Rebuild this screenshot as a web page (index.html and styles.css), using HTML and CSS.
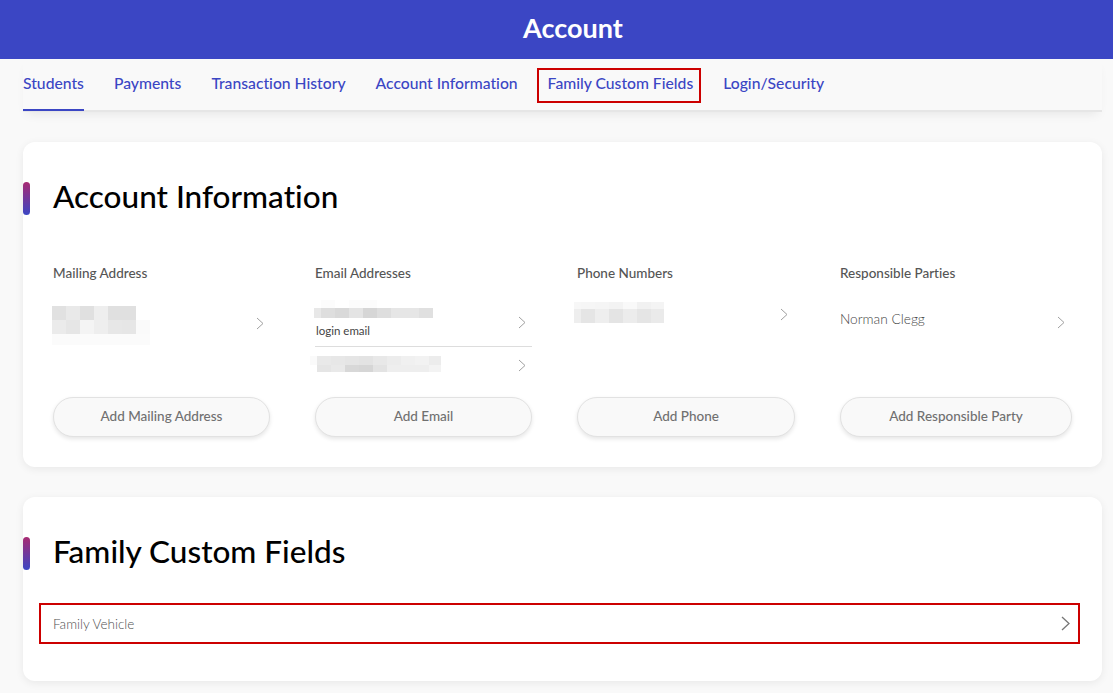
FILE: index.html
```html
<!DOCTYPE html>
<html>
<head>
    <title>Account</title>
    <link rel="stylesheet" href="styles.css">
</head>
<body>
    <header class="page-header">Account</header>
    <!-- Tabs -->
    <nav class="tabs">
        <a class="tab active">Students</a>
        <a class="tab">Payments</a>
        <a class="tab">Transaction History</a>
        <a class="tab">Account Information</a>
        <a class="tab marked">Family Custom Fields</a>
        <a class="tab">Login/Security</a>
    </nav>
    <main class="content">
        <section class="card">
            <h2 class="card-title">Account Information</h2>
            <div class="info-grid">
                <div class="info-col">
                    <h3 class="info-label">Mailing Address</h3>
                    <div class="info-list">
                        <div class="info-row row-address">
                            <!-- Blurred address -->
                            <svg class="blur" width="98" height="39" viewBox="0 0 98 39" shape-rendering="crispEdges">
                                <rect x="0" y="0" width="14" height="14" fill="#e1e1e1"/>
                                <rect x="14" y="0" width="14" height="14" fill="#e9e9e9"/>
                                <rect x="28" y="0" width="14" height="14" fill="#e0e0e0"/>
                                <rect x="42" y="0" width="14" height="14" fill="#eeeeee"/>
                                <rect x="56" y="0" width="28" height="14" fill="#e0e0e0"/>
                                <rect x="0" y="14" width="14" height="14" fill="#ebebeb"/>
                                <rect x="14" y="14" width="14" height="14" fill="#e6e6e6"/>
                                <rect x="28" y="14" width="14" height="14" fill="#f4f4f4"/>
                                <rect x="42" y="14" width="14" height="14" fill="#eeeeee"/>
                                <rect x="56" y="14" width="14" height="14" fill="#e7e7e7"/>
                                <rect x="70" y="14" width="14" height="14" fill="#e6e6e6"/>
                                <rect x="84" y="14" width="14" height="14" fill="#fafafa"/>
                                <rect x="0" y="28" width="98" height="11" fill="#fbfbfb"/>
                            </svg>
                            <svg class="chevron" width="8" height="13" viewBox="0 0 8 13"><path d="M1 1l6 5.5-6 5.5"/></svg>
                        </div>
                    </div>
                    <button class="add-btn">Add Mailing Address</button>
                </div>
                <div class="info-col">
                    <h3 class="info-label">Email Addresses</h3>
                    <div class="info-list">
                        <div class="info-row row-email">
                            <div class="email-main">
                                <!-- Blurred email -->
                                <svg class="blur" width="119" height="18" viewBox="0 0 119 18" shape-rendering="crispEdges">
                                    <rect x="7" y="0" width="14" height="8" fill="#fcfcfc"/>
                                    <rect x="35" y="0" width="28" height="8" fill="#fcfcfc"/>
                                    <rect x="0" y="8" width="7" height="10" fill="#e8e8e8"/>
                                    <rect x="7" y="8" width="14" height="10" fill="#dedede"/>
                                    <rect x="21" y="8" width="14" height="10" fill="#d9d9d9"/>
                                    <rect x="35" y="8" width="14" height="10" fill="#e4e4e4"/>
                                    <rect x="49" y="8" width="14" height="10" fill="#d6d6d6"/>
                                    <rect x="63" y="8" width="14" height="10" fill="#dedede"/>
                                    <rect x="77" y="8" width="28" height="10" fill="#e6e6e6"/>
                                    <rect x="105" y="8" width="14" height="10" fill="#e0e0e0"/>
                                </svg>
                                <span class="email-note">login email</span>
                            </div>
                            <svg class="chevron" width="8" height="13" viewBox="0 0 8 13"><path d="M1 1l6 5.5-6 5.5"/></svg>
                        </div>
                        <div class="info-row row-email-second">
                            <svg class="blur" width="131" height="16" viewBox="0 0 131 16" shape-rendering="crispEdges">
                                <rect x="0" y="0" width="7" height="9" fill="#fafafa"/>
                                <rect x="7" y="0" width="14" height="9" fill="#e9e9e9"/>
                                <rect x="21" y="0" width="14" height="9" fill="#e7e7e7"/>
                                <rect x="35" y="0" width="14" height="9" fill="#e5e5e5"/>
                                <rect x="49" y="0" width="14" height="9" fill="#e3e3e3"/>
                                <rect x="63" y="0" width="14" height="9" fill="#e8e8e8"/>
                                <rect x="77" y="0" width="14" height="9" fill="#ececec"/>
                                <rect x="91" y="0" width="14" height="9" fill="#f0f0f0"/>
                                <rect x="105" y="0" width="14" height="9" fill="#f2f2f2"/>
                                <rect x="119" y="0" width="12" height="9" fill="#ececec"/>
                                <rect x="7" y="9" width="14" height="7" fill="#e5e5e5"/>
                                <rect x="21" y="9" width="14" height="7" fill="#e9e9e9"/>
                                <rect x="35" y="9" width="14" height="7" fill="#d8d8d8"/>
                                <rect x="49" y="9" width="14" height="7" fill="#d6d6d6"/>
                                <rect x="63" y="9" width="14" height="7" fill="#e3e3e3"/>
                                <rect x="77" y="9" width="42" height="7" fill="#eeeeee"/>
                                <rect x="119" y="9" width="12" height="7" fill="#f3f3f3"/>
                            </svg>
                            <svg class="chevron" width="8" height="13" viewBox="0 0 8 13"><path d="M1 1l6 5.5-6 5.5"/></svg>
                        </div>
                    </div>
                    <button class="add-btn">Add Email</button>
                </div>
                <div class="info-col">
                    <h3 class="info-label">Phone Numbers</h3>
                    <div class="info-list">
                        <div class="info-row row-phone">
                            <svg class="blur" width="90" height="21" viewBox="0 0 90 21" shape-rendering="crispEdges">
                                <rect x="0" y="0" width="7" height="7" fill="#f7f7f7"/>
                                <rect x="7" y="0" width="14" height="7" fill="#f6f6f6"/>
                                <rect x="21" y="0" width="14" height="7" fill="#f5f5f5"/>
                                <rect x="35" y="0" width="14" height="7" fill="#f3f3f3"/>
                                <rect x="49" y="0" width="14" height="7" fill="#f9f9f9"/>
                                <rect x="63" y="0" width="14" height="7" fill="#f1f1f1"/>
                                <rect x="77" y="0" width="13" height="7" fill="#f4f4f4"/>
                                <rect x="0" y="7" width="7" height="14" fill="#eeeeee"/>
                                <rect x="7" y="7" width="14" height="14" fill="#e5e5e5"/>
                                <rect x="21" y="7" width="14" height="14" fill="#eeeeee"/>
                                <rect x="35" y="7" width="14" height="14" fill="#e4e4e4"/>
                                <rect x="49" y="7" width="14" height="14" fill="#ececec"/>
                                <rect x="63" y="7" width="14" height="14" fill="#e5e5e5"/>
                                <rect x="77" y="7" width="13" height="14" fill="#eaeaea"/>
                            </svg>
                            <svg class="chevron" width="8" height="13" viewBox="0 0 8 13"><path d="M1 1l6 5.5-6 5.5"/></svg>
                        </div>
                    </div>
                    <button class="add-btn">Add Phone</button>
                </div>
                <div class="info-col">
                    <h3 class="info-label">Responsible Parties</h3>
                    <div class="info-list">
                        <div class="info-row row-party">
                            <span class="party-name">Norman Clegg</span>
                            <svg class="chevron" width="8" height="13" viewBox="0 0 8 13"><path d="M1 1l6 5.5-6 5.5"/></svg>
                        </div>
                    </div>
                    <button class="add-btn">Add Responsible Party</button>
                </div>
            </div>
        </section>
        <section class="card card-fields">
            <h2 class="card-title">Family Custom Fields</h2>
            <div class="field-row">
                <span class="field-name">Family Vehicle</span>
                <svg class="chevron-large" width="9" height="15" viewBox="0 0 9 15"><path d="M1 1l7 6.5-7 6.5"/></svg>
            </div>
        </section>
    </main>
</body>
</html>
```

FILE: styles.css
```css
* {
    box-sizing: border-box;
}
html, body {
    height: 693px;
    overflow: hidden;
}
body {
    margin: 0;
    background-color: #f9f9f9;
    font-family: Lato, "Open Sans", sans-serif;
    font-variant-ligatures: none;
    color: #555555;
}
.page-header {
    height: 59px;
    padding-left: 33px;
    background-color: #3b46c4;
    color: #ffffff;
    font-size: 27px;
    font-weight: 700;
    line-height: 56px;
    text-align: center;
}
.tabs {
    display: flex;
    gap: 30px;
    height: 53px;
    margin: 0 11px 0 23px;
    border-bottom: 2px solid #e6e6e6;
    box-shadow: 0 6px 10px -4px rgba(0, 0, 0, 0.08);
}
.tab {
    position: relative;
    height: 52px;
    color: #3b46c4;
    font-size: 15.7px;
    font-weight: 500;
    line-height: 48px;
}
.tab.active {
    border-bottom: 2px solid #3b46c4;
}
/* Red annotation box */
.tab.marked::after {
    content: "";
    position: absolute;
    top: 9px;
    left: -11px;
    right: -8px;
    height: 31px;
    border: 2px solid #cc0000;
}
.content {
    display: flex;
    flex-direction: column;
    gap: 30px;
    margin: 30px 11px 0 23px;
}
.card {
    position: relative;
    padding: 34px 30px 30px;
    background-color: #ffffff;
    border-radius: 12px;
    box-shadow: 0 2px 8px rgba(0, 0, 0, 0.07);
}
.card-fields {
    height: 184px;
}
/* Gradient marker beside the card title */
.card::before {
    content: "";
    position: absolute;
    top: 40px;
    left: 0;
    width: 7px;
    height: 33px;
    border-radius: 4px;
    background: linear-gradient(#a82a72, #3b46c4);
}
.card-title {
    margin: 0;
    color: #000000;
    font-size: 31.5px;
    font-weight: 500;
    line-height: 40px;
}
.info-grid {
    display: grid;
    grid-template-columns: 217px 217px 218px 232px;
    gap: 45px;
    margin-top: 47px;
}
.info-col {
    display: flex;
    flex-direction: column;
}
.info-label {
    margin: 0;
    color: #555555;
    font-size: 13.5px;
    font-weight: 500;
    line-height: 20px;
}
.info-list {
    height: 114px;
}
.info-row {
    display: flex;
    justify-content: space-between;
}
.blur {
    display: block;
}
.chevron path {
    fill: none;
    stroke: #a0a0a0;
    stroke-width: 1;
}
.row-address {
    padding: 23px 6px 0 0;
    margin-left: -1px;
}
.row-address .chevron {
    margin-top: 11px;
}
.row-email {
    height: 64px;
    padding: 17px 6px 0 0;
    border-bottom: 1px solid #dddddd;
}
.row-email .chevron {
    margin-top: 16px;
}
.email-main {
    margin-left: -1px;
}
.email-note {
    display: block;
    margin: 6px 0 0 2px;
    color: #444444;
    font-size: 11.5px;
    line-height: 14px;
}
.row-email-second {
    padding: 9px 6px 0 0;
    margin-left: -5px;
}
.row-email-second .chevron {
    margin-top: 3px;
}
.row-phone {
    padding: 19px 7px 0 0;
    margin-left: -3px;
}
.row-phone .chevron {
    margin-top: 6px;
}
.row-party {
    padding: 27px 7px 0 0;
}
.row-party .chevron {
    margin-top: 6px;
}
.party-name {
    color: #444444;
    font-size: 13.7px;
    font-weight: 300;
    line-height: 18px;
}
.add-btn {
    height: 40px;
    padding: 0 0 2px;
    background-color: #f9f9f9;
    border: 1px solid #e2e2e2;
    border-radius: 20px;
    box-shadow: 0 2px 4px rgba(0, 0, 0, 0.1);
    color: #707070;
    font-family: inherit;
    font-size: 13.5px;
    font-weight: 500;
}
.field-row {
    position: absolute;
    top: 106px;
    left: 16px;
    right: 22px;
    display: flex;
    align-items: center;
    justify-content: space-between;
    height: 41px;
    padding: 0 8px 0 12px;
    border: 2px solid #cc0000;
}
.field-name {
    color: #505050;
    font-size: 13.5px;
    font-weight: 300;
}
.chevron-large path {
    fill: none;
    stroke: #777777;
    stroke-width: 1.3;
}
```
